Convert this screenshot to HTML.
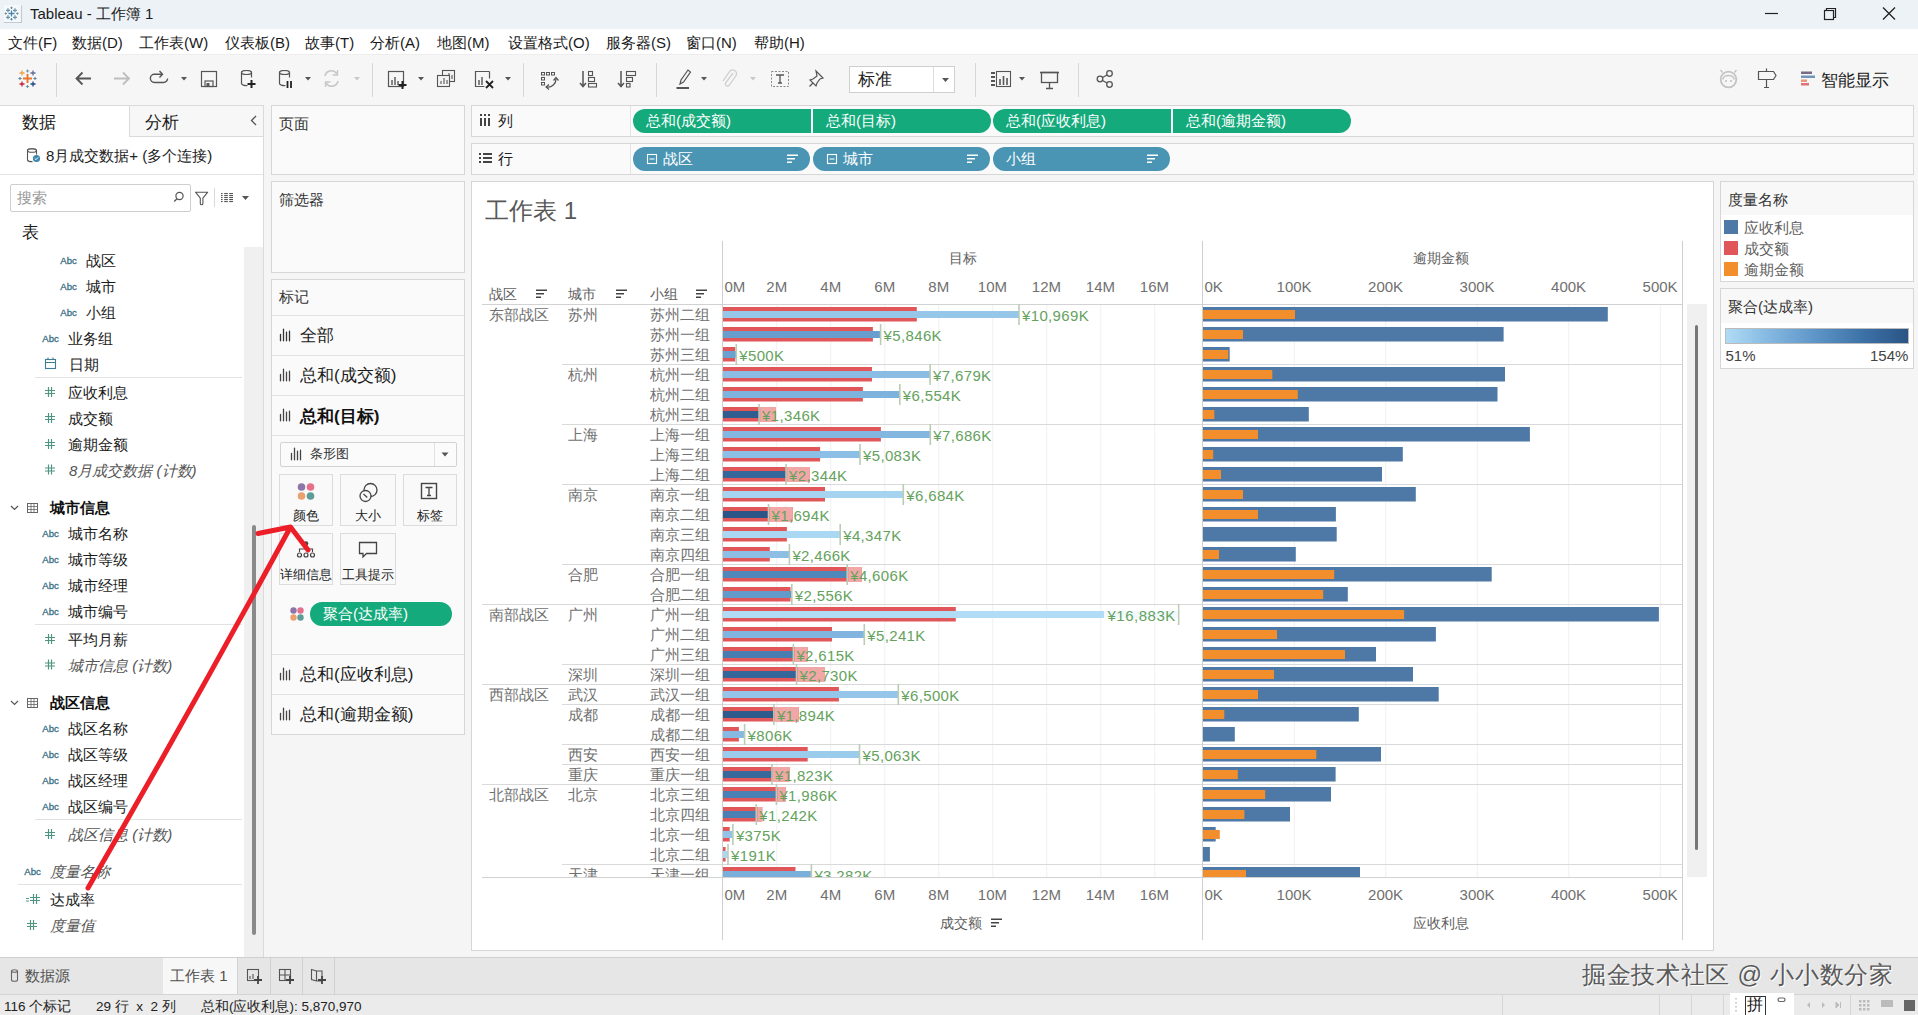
<!DOCTYPE html><html><head><meta charset="utf-8"><style>
html,body{margin:0;padding:0;}
body{width:1918px;height:1015px;overflow:hidden;position:relative;background:#F5F5F5;font-family:"Liberation Sans",sans-serif;}
.t{position:absolute;white-space:nowrap;line-height:1;}
.r{position:absolute;}
svg{position:absolute;overflow:visible;}
</style></head><body>
<div class="r" style="left:0px;top:0px;width:1918px;height:29px;background:#EDF2F7;"></div>
<div class="t" style="left:30px;top:6px;font-size:15px;color:#1A1A1A;font-weight:normal;">Tableau - 工作簿 1</div>
<svg style="left:0;top:0" width="1918" height="28"><line x1="1765" y1="13.5" x2="1778" y2="13.5" stroke="#222" stroke-width="1.2"/><rect x="1824.5" y="10.5" width="9" height="9" fill="none" stroke="#222" stroke-width="1.2"/><path d="M1826.5 10.5 V8.5 H1835.5 V17.5 H1833.5" fill="none" stroke="#222" stroke-width="1.2"/><path d="M1883 7.5 L1895 19.5 M1895 7.5 L1883 19.5" stroke="#222" stroke-width="1.3"/></svg>
<svg style="left:0;top:0" width="30" height="30"><rect x="4" y="5" width="17.5" height="17.5" fill="#F6F9FB"/><path d="M21.5 5.5V22.5H4" fill="none" stroke="#C5CAD1" stroke-width="1.2"/><path d="M8.5 13.5H14.5M11.5 10.5V16.5" stroke="#4A86B0" stroke-width="1.3"/><path d="M6 10.3H10M8 8.3V12.3" stroke="#6C93A6" stroke-width="1.2"/><path d="M13 10.3H17M15 8.3V12.3" stroke="#6C93A6" stroke-width="1.2"/><path d="M6 17.3H10M8 15.3V19.3" stroke="#6C93A6" stroke-width="1.2"/><path d="M13 17.3H17M15 15.3V19.3" stroke="#6C93A6" stroke-width="1.2"/><path d="M10.3 7.8H12.7M11.5 6.6V9.0" stroke="#6C8FA0" stroke-width="1"/><path d="M10.3 19.3H12.7M11.5 18.1V20.5" stroke="#4A86B0" stroke-width="1"/><path d="M4.6 13.5H7.0M5.8 12.3V14.7" stroke="#6C8FA0" stroke-width="1"/><path d="M16.2 13.5H18.599999999999998M17.4 12.3V14.7" stroke="#6C8FA0" stroke-width="1"/></svg>
<div class="r" style="left:0px;top:29px;width:1918px;height:25px;background:#FFFFFF;"></div>
<div class="t" style="left:8px;top:35px;font-size:15px;color:#1A1A1A;font-weight:normal;">文件(F)</div>
<div class="t" style="left:72px;top:35px;font-size:15px;color:#1A1A1A;font-weight:normal;">数据(D)</div>
<div class="t" style="left:139px;top:35px;font-size:15px;color:#1A1A1A;font-weight:normal;">工作表(W)</div>
<div class="t" style="left:225px;top:35px;font-size:15px;color:#1A1A1A;font-weight:normal;">仪表板(B)</div>
<div class="t" style="left:305px;top:35px;font-size:15px;color:#1A1A1A;font-weight:normal;">故事(T)</div>
<div class="t" style="left:370px;top:35px;font-size:15px;color:#1A1A1A;font-weight:normal;">分析(A)</div>
<div class="t" style="left:437px;top:35px;font-size:15px;color:#1A1A1A;font-weight:normal;">地图(M)</div>
<div class="t" style="left:508px;top:35px;font-size:15px;color:#1A1A1A;font-weight:normal;">设置格式(O)</div>
<div class="t" style="left:606px;top:35px;font-size:15px;color:#1A1A1A;font-weight:normal;">服务器(S)</div>
<div class="t" style="left:686px;top:35px;font-size:15px;color:#1A1A1A;font-weight:normal;">窗口(N)</div>
<div class="t" style="left:754px;top:35px;font-size:15px;color:#1A1A1A;font-weight:normal;">帮助(H)</div>
<div class="r" style="left:0px;top:54px;width:1918px;height:51px;background:#F6F6F6;border-top:1px solid #EDEDED;box-sizing:border-box;"></div>
<svg style="left:0;top:0" width="1918" height="105"><path d="M23.0 78.5H32.0M27.5 74.0V83.0" stroke="#E8762C" stroke-width="1.9"/><path d="M19.5 73H24.5M22 70.5V75.5" stroke="#EDA247" stroke-width="1.3"/><path d="M30.5 73H35.5M33 70.5V75.5" stroke="#5B6F9B" stroke-width="1.3"/><path d="M19.5 84H24.5M22 81.5V86.5" stroke="#C72037" stroke-width="1.3"/><path d="M30.5 84H35.5M33 81.5V86.5" stroke="#1F457E" stroke-width="1.3"/><path d="M25.9 71H29.1M27.5 69.4V72.6" stroke="#7099A6" stroke-width="1.1"/><path d="M25.9 86.5H29.1M27.5 84.9V88.1" stroke="#7099A6" stroke-width="1.1"/><path d="M18.4 78.5H21.6M20 76.9V80.1" stroke="#59879B" stroke-width="1.1"/><path d="M33.4 78.5H36.6M35 76.9V80.1" stroke="#59879B" stroke-width="1.1"/><line x1="56.5" y1="63" x2="56.5" y2="97" stroke="#D6D6D6" stroke-width="1"/><line x1="372.5" y1="63" x2="372.5" y2="97" stroke="#D6D6D6" stroke-width="1"/><line x1="523.5" y1="63" x2="523.5" y2="97" stroke="#D6D6D6" stroke-width="1"/><line x1="656.5" y1="63" x2="656.5" y2="97" stroke="#D6D6D6" stroke-width="1"/><line x1="975.5" y1="63" x2="975.5" y2="97" stroke="#D6D6D6" stroke-width="1"/><line x1="1078.5" y1="63" x2="1078.5" y2="97" stroke="#D6D6D6" stroke-width="1"/><path d="M91 78.5H76.5M82.5 72.5L76.5 78.5L82.5 84.5" fill="none" stroke="#555" stroke-width="1.8"/><path d="M114 78.5H129M123 72.5L129 78.5L123 84.5" fill="none" stroke="#BDBDBD" stroke-width="1.8"/><path d="M162 74.2H154.5a4.1 4.1 0 0 0 0 8.3h9a4.1 4.1 0 0 0 4.1-4.1" fill="none" stroke="#555" stroke-width="1.4"/><path d="M159.5 71l3 3.2-3 3.2" fill="none" stroke="#555" stroke-width="1.4"/><path d="M181 77 h6 l-3 3.5z" fill="#555"/><rect x="201.5" y="71.5" width="15" height="15" fill="none" stroke="#555" stroke-width="1.2"/><rect x="205" y="81" width="8" height="5.5" fill="none" stroke="#555" stroke-width="1.2"/><rect x="206.5" y="83" width="3" height="3" fill="#555"/><path d="M241.5 72.5v11a5 2 0 0 0 6 2M241.5 72.5a5 2 0 0 1 10 0v5" fill="none" stroke="#555" stroke-width="1.2"/><ellipse cx="246.5" cy="72.5" rx="5" ry="2" fill="none" stroke="#555" stroke-width="1.2"/><path d="M251.5 80v8M247.5 84h8" stroke="#222" stroke-width="2"/><path d="M279.5 72.5v11a5 2 0 0 0 6 2M279.5 72.5a5 2 0 0 1 10 0v5" fill="none" stroke="#555" stroke-width="1.2"/><ellipse cx="284.5" cy="72.5" rx="5" ry="2" fill="none" stroke="#555" stroke-width="1.2"/><path d="M287.5 81v7M291 81v7" stroke="#222" stroke-width="1.8"/><path d="M305 77 h6 l-3 3.5z" fill="#555"/><path d="M325 76a6.5 6.5 0 0 1 12 -2M338 81a6.5 6.5 0 0 1 -12 2" fill="none" stroke="#C8C8C8" stroke-width="1.6"/><path d="M337.5 70v5h-5M325.5 87v-5h5" fill="none" stroke="#C8C8C8" stroke-width="1.4"/><path d="M354 77 h6 l-3 3.5z" fill="#C8C8C8"/><rect x="388.5" y="71.5" width="15" height="15" fill="none" stroke="#555" stroke-width="1.2"/><path d="M392 85v-5M395 85v-8M398 85v-4" stroke="#555" stroke-width="1.4"/><path d="M402.5 81v8M398.5 85h8" stroke="#222" stroke-width="2"/><path d="M418 77 h6 l-3 3.5z" fill="#555"/><rect x="442.5" y="70.5" width="12" height="11" fill="#F3F3F3" stroke="#555" stroke-width="1.1"/><path d="M446 79v-3M449 79v-6M452 79v-4" stroke="#555" stroke-width="1.1"/><rect x="437.5" y="75.5" width="12" height="11" fill="#F3F3F3" stroke="#555" stroke-width="1.1"/><path d="M441 84v-3M444 84v-6M447 84v-4" stroke="#555" stroke-width="1.1"/><path d="M489.5 71.5h-14v15h9" fill="none" stroke="#555" stroke-width="1.2"/><path d="M489.5 71.5v7" stroke="#555" stroke-width="1.2"/><path d="M479 85v-5M482 85v-8" stroke="#555" stroke-width="1.4"/><path d="M486 81l7 7M493 81l-7 7" stroke="#222" stroke-width="1.8"/><path d="M505 77 h6 l-3 3.5z" fill="#555"/><g fill="none" stroke="#555" stroke-width="1"><rect x="541.5" y="72.5" width="3" height="2.5"/><rect x="546.5" y="72.5" width="3" height="2.5"/><rect x="551.5" y="72.5" width="3" height="2.5"/><rect x="541.5" y="77.5" width="3" height="2.5"/><rect x="541.5" y="82.5" width="3" height="2.5"/></g><path d="M547 87a8 8 0 0 0 9-8" fill="none" stroke="#555" stroke-width="1.3"/><path d="M553.5 80.5l2.5-3 2.5 3M549 84.5l-3 2.5 3 2.5" fill="none" stroke="#555" stroke-width="1.2"/><path d="M583 71v15M580 83l3 3.5 3-3.5" fill="none" stroke="#555" stroke-width="1.5"/><rect x="588.5" y="71.5" width="4" height="4" fill="none" stroke="#555" stroke-width="1.1"/><rect x="588.5" y="77.5" width="6" height="4" fill="none" stroke="#555" stroke-width="1.1"/><rect x="588.5" y="83.5" width="8" height="3.5" fill="none" stroke="#555" stroke-width="1.1"/><path d="M621 71v15M618 83l3 3.5 3-3.5" fill="none" stroke="#555" stroke-width="1.5"/><rect x="626.5" y="71.5" width="9" height="4" fill="none" stroke="#555" stroke-width="1.1"/><rect x="626.5" y="77.5" width="6" height="4" fill="none" stroke="#555" stroke-width="1.1"/><rect x="626.5" y="83.5" width="3.5" height="3.5" fill="none" stroke="#555" stroke-width="1.1"/><path d="M680 84l1-4 7-10 2.5 2-7 10z" fill="none" stroke="#555" stroke-width="1.2"/><path d="M676.5 88h12.5" stroke="#555" stroke-width="2"/><path d="M701 77 h6 l-3 3.5z" fill="#555"/><path d="M733 73l-7.5 10a2.2 2.2 0 0 0 3.5 2.5l7-10a3.8 3.8 0 0 0 -6 -4.5l-7 10" fill="none" stroke="#CFCFCF" stroke-width="1.3"/><path d="M750 77 h6 l-3 3.5z" fill="#C8C8C8"/><rect x="771.5" y="71.5" width="17" height="15" fill="none" stroke="#888" stroke-width="1" stroke-dasharray="2 1.5"/><path d="M776 75h8M780 75v8M778 83h4" stroke="#555" stroke-width="1.3" fill="none"/><path d="M816 71l7 7-3 1-3 4-1 3-6-6 3-1 4-3z" fill="none" stroke="#555" stroke-width="1.2"/><path d="M813 83l-3.5 3.5" stroke="#555" stroke-width="1.3"/><g fill="#555"><rect x="991" y="72" width="4" height="2"/><rect x="991" y="76" width="4" height="2"/><rect x="991" y="80" width="4" height="2"/><rect x="991" y="84" width="4" height="2"/></g><rect x="996.5" y="71.5" width="14" height="15" fill="none" stroke="#555" stroke-width="1.1"/><path d="M1000 85v-6M1003.5 85v-9M1007 85v-7" stroke="#555" stroke-width="1.6"/><path d="M1019 77 h6 l-3 3.5z" fill="#555"/><rect x="1041.5" y="72.5" width="16" height="10" fill="none" stroke="#555" stroke-width="1.3"/><path d="M1040 72.5h19M1049.5 82.5v6M1046 88.5h7" stroke="#555" stroke-width="1.3"/><circle cx="1100" cy="79" r="2.8" fill="none" stroke="#555" stroke-width="1.3"/><circle cx="1109.5" cy="73.5" r="2.8" fill="none" stroke="#555" stroke-width="1.3"/><circle cx="1109.5" cy="84.5" r="2.8" fill="none" stroke="#555" stroke-width="1.3"/><path d="M1102.5 77.5l4.5-2.5M1102.5 80.5l4.5 2.5" stroke="#555" stroke-width="1.3"/><circle cx="1728.5" cy="79.5" r="7.8" fill="none" stroke="#C4C4C4" stroke-width="1.8"/><path d="M1723 79.5a5.5 4 0 0 1 11 0" fill="none" stroke="#C4C4C4" stroke-width="1.6"/><circle cx="1726" cy="81" r="1.1" fill="#C4C4C4"/><circle cx="1731" cy="81" r="1.1" fill="#C4C4C4"/><path d="M1722.5 72.5l-2 -2.5M1734.5 72.5l2 -2.5" stroke="#C4C4C4" stroke-width="1.4"/><path d="M1758.5 71.5h15l2.5 4-2.5 4h-15z M1766.5 68.5v3M1766.5 79.5v8M1764 87.5h5" fill="none" stroke="#555" stroke-width="1.2"/><rect x="1801" y="71.5" width="11" height="2.5" fill="#786C84"/><rect x="1801" y="75.5" width="14" height="2.5" fill="#7395B8"/><rect x="1801" y="79.5" width="6" height="2.5" fill="#E9967C"/><rect x="1801" y="83" width="8" height="2.5" fill="#E0707A"/></svg>
<div class="t" style="left:1821px;top:71.5px;font-size:17px;color:#1A1A1A;font-weight:normal;">智能显示</div>
<div class="r" style="left:849px;top:66px;width:106px;height:27px;background:#FFFFFF;box-sizing:border-box;border:1px solid #CFCFCF;"></div>
<div class="r" style="left:933px;top:67px;width:1px;height:25px;background:#DDDDDD;"></div>
<div class="t" style="left:858px;top:71px;font-size:17px;color:#222;font-weight:normal;">标准</div>
<svg style="left:0;top:0" width="1" height="1"><path d="M942 78h7l-3.5 4z" fill="#555"/></svg>
<div class="r" style="left:0px;top:105px;width:264px;height:852px;background:#FFFFFF;box-sizing:border-box;border-top:1px solid #DADADA;border-right:1px solid #DADADA;"></div>
<div class="r" style="left:129px;top:106px;width:134px;height:31px;background:#F7F7F7;box-sizing:border-box;border-left:1px solid #DADADA;border-bottom:1px solid #DADADA;"></div>
<div class="t" style="left:22px;top:113.5px;font-size:17px;color:#1A1A1A;font-weight:normal;">数据</div>
<div class="t" style="left:145px;top:113.5px;font-size:17px;color:#1A1A1A;font-weight:normal;">分析</div>
<svg style="left:0;top:0" width="1" height="1"><path d="M256 116l-4.5 4.5 4.5 4.5" fill="none" stroke="#555" stroke-width="1.3"/></svg>
<svg style="left:0;top:0" width="1" height="1"><path d="M27.5 150.5v9.5a4.5 1.8 0 0 0 5 1.6M27.5 150.5a4.5 1.8 0 0 1 9 0v4" fill="none" stroke="#555" stroke-width="1.1"/><ellipse cx="32" cy="150.5" rx="4.5" ry="1.8" fill="none" stroke="#555" stroke-width="1.1"/><circle cx="36.5" cy="158.5" r="3.6" fill="#3E88B0"/><path d="M34.8 158.5l1.2 1.2 2.2-2.3" fill="none" stroke="#fff" stroke-width="1"/></svg>
<div class="t" style="left:46px;top:148px;font-size:15px;color:#222;font-weight:normal;">8月成交数据+ (多个连接)</div>
<div class="r" style="left:0px;top:174px;width:263px;height:1px;background:#E2E2E2;"></div>
<div class="r" style="left:10px;top:184px;width:181px;height:28px;background:#FFFFFF;box-sizing:border-box;border:1px solid #CFCFCF;border-radius:2px;"></div>
<div class="t" style="left:17px;top:190px;font-size:15px;color:#9A9A9A;font-weight:normal;">搜索</div>
<svg style="left:0;top:0" width="1" height="1"><circle cx="179.5" cy="196" r="3.6" fill="none" stroke="#555" stroke-width="1.2"/><path d="M177 198.7l-2.8 2.8" stroke="#555" stroke-width="1.3"/><path d="M195.5 192.2h12.2l-4.8 6v5.2a1.3 1.3 0 0 1 -2.6 0v-5.2z" fill="none" stroke="#555" stroke-width="1.1" stroke-linejoin="round"/><line x1="214.5" y1="188" x2="214.5" y2="207" stroke="#D8D8D8"/><g fill="#555"><rect x="221" y="193" width="1.6" height="1.1"/><rect x="224.2" y="193" width="3.6" height="1.1"/><rect x="229.2" y="193" width="3.8" height="1.1"/><rect x="221" y="195" width="1.6" height="1.1"/><rect x="224.2" y="195" width="3.6" height="1.1"/><rect x="229.2" y="195" width="3.8" height="1.1"/><rect x="221" y="197" width="1.6" height="1.1"/><rect x="224.2" y="197" width="3.6" height="1.1"/><rect x="229.2" y="197" width="3.8" height="1.1"/><rect x="221" y="199" width="1.6" height="1.1"/><rect x="224.2" y="199" width="3.6" height="1.1"/><rect x="229.2" y="199" width="3.8" height="1.1"/><rect x="221" y="201" width="1.6" height="1.1"/><rect x="224.2" y="201" width="3.6" height="1.1"/><rect x="229.2" y="201" width="3.8" height="1.1"/></g><path d="M242 196h7l-3.5 4z" fill="#555"/></svg>
<div class="t" style="left:22px;top:224px;font-size:17px;color:#1A1A1A;font-weight:normal;">表</div>
<div class="r" style="left:244px;top:247px;width:19px;height:710px;background:#F0F0F0;"></div>
<div class="r" style="left:252px;top:525px;width:3.5px;height:410px;background:#8A8A8A;border-radius:2px;"></div>
<div class="t" style="left:60.3px;top:255.7px;font-size:9.6px;color:#3A7085;font-weight:normal;-webkit-text-stroke:0.3px #3A7085;">Abc</div>
<div class="t" style="left:86px;top:252.5px;font-size:15px;color:#1A1A1A;font-weight:normal;">战区</div>
<div class="t" style="left:60.3px;top:281.7px;font-size:9.6px;color:#3A7085;font-weight:normal;-webkit-text-stroke:0.3px #3A7085;">Abc</div>
<div class="t" style="left:86px;top:278.5px;font-size:15px;color:#1A1A1A;font-weight:normal;">城市</div>
<div class="t" style="left:60.3px;top:307.7px;font-size:9.6px;color:#3A7085;font-weight:normal;-webkit-text-stroke:0.3px #3A7085;">Abc</div>
<div class="t" style="left:86px;top:304.5px;font-size:15px;color:#1A1A1A;font-weight:normal;">小组</div>
<div class="t" style="left:42.3px;top:333.7px;font-size:9.6px;color:#3A7085;font-weight:normal;-webkit-text-stroke:0.3px #3A7085;">Abc</div>
<div class="t" style="left:68px;top:330.5px;font-size:15px;color:#1A1A1A;font-weight:normal;">业务组</div>
<svg style="left:0;top:0" width="1" height="1"><rect x="45.5" y="359.5" width="10" height="9" fill="none" stroke="#3E7B95" stroke-width="1.1"/><path d="M45 362.5h11M48 357.5v2M53 357.5v2" stroke="#3E7B95" stroke-width="1.1"/></svg>
<div class="t" style="left:69px;top:356.5px;font-size:15px;color:#1A1A1A;font-weight:normal;">日期</div>
<svg style="left:0;top:0" width="1" height="1"><path d="M48.5 387.0v10M51.5 387.0v10M45 390.5h10M45 393.5h10" stroke="#4F9480" stroke-width="1.15"/></svg>
<div class="t" style="left:68px;top:385.0px;font-size:15px;color:#1A1A1A;font-weight:normal;">应收利息</div>
<svg style="left:0;top:0" width="1" height="1"><path d="M48.5 413.0v10M51.5 413.0v10M45 416.5h10M45 419.5h10" stroke="#4F9480" stroke-width="1.15"/></svg>
<div class="t" style="left:68px;top:411.0px;font-size:15px;color:#1A1A1A;font-weight:normal;">成交额</div>
<svg style="left:0;top:0" width="1" height="1"><path d="M48.5 439.0v10M51.5 439.0v10M45 442.5h10M45 445.5h10" stroke="#4F9480" stroke-width="1.15"/></svg>
<div class="t" style="left:68px;top:437.0px;font-size:15px;color:#1A1A1A;font-weight:normal;">逾期金额</div>
<svg style="left:0;top:0" width="1" height="1"><path d="M48.5 464.5v10M51.5 464.5v10M45 468h10M45 471h10" stroke="#4F9480" stroke-width="1.15"/></svg>
<div class="t" style="left:69px;top:462.5px;font-size:15px;color:#555;font-weight:normal;font-style:italic;">8月成交数据 (计数)</div>
<div class="t" style="left:42.3px;top:529.2px;font-size:9.6px;color:#3A7085;font-weight:normal;-webkit-text-stroke:0.3px #3A7085;">Abc</div>
<div class="t" style="left:68px;top:526.0px;font-size:15px;color:#1A1A1A;font-weight:normal;">城市名称</div>
<div class="t" style="left:42.3px;top:555.2px;font-size:9.6px;color:#3A7085;font-weight:normal;-webkit-text-stroke:0.3px #3A7085;">Abc</div>
<div class="t" style="left:68px;top:552.0px;font-size:15px;color:#1A1A1A;font-weight:normal;">城市等级</div>
<div class="t" style="left:42.3px;top:581.2px;font-size:9.6px;color:#3A7085;font-weight:normal;-webkit-text-stroke:0.3px #3A7085;">Abc</div>
<div class="t" style="left:68px;top:578.0px;font-size:15px;color:#1A1A1A;font-weight:normal;">城市经理</div>
<div class="t" style="left:42.3px;top:607.2px;font-size:9.6px;color:#3A7085;font-weight:normal;-webkit-text-stroke:0.3px #3A7085;">Abc</div>
<div class="t" style="left:68px;top:604.0px;font-size:15px;color:#1A1A1A;font-weight:normal;">城市编号</div>
<svg style="left:0;top:0" width="1" height="1"><path d="M48.5 634.0v10M51.5 634.0v10M45 637.5h10M45 640.5h10" stroke="#4F9480" stroke-width="1.15"/></svg>
<div class="t" style="left:68px;top:632.0px;font-size:15px;color:#1A1A1A;font-weight:normal;">平均月薪</div>
<svg style="left:0;top:0" width="1" height="1"><path d="M48.5 659.5v10M51.5 659.5v10M45 663h10M45 666h10" stroke="#4F9480" stroke-width="1.15"/></svg>
<div class="t" style="left:68px;top:657.5px;font-size:15px;color:#555;font-weight:normal;font-style:italic;">城市信息 (计数)</div>
<div class="t" style="left:42.3px;top:724.2px;font-size:9.6px;color:#3A7085;font-weight:normal;-webkit-text-stroke:0.3px #3A7085;">Abc</div>
<div class="t" style="left:68px;top:721.0px;font-size:15px;color:#1A1A1A;font-weight:normal;">战区名称</div>
<div class="t" style="left:42.3px;top:750.2px;font-size:9.6px;color:#3A7085;font-weight:normal;-webkit-text-stroke:0.3px #3A7085;">Abc</div>
<div class="t" style="left:68px;top:747.0px;font-size:15px;color:#1A1A1A;font-weight:normal;">战区等级</div>
<div class="t" style="left:42.3px;top:776.2px;font-size:9.6px;color:#3A7085;font-weight:normal;-webkit-text-stroke:0.3px #3A7085;">Abc</div>
<div class="t" style="left:68px;top:773.0px;font-size:15px;color:#1A1A1A;font-weight:normal;">战区经理</div>
<div class="t" style="left:42.3px;top:802.2px;font-size:9.6px;color:#3A7085;font-weight:normal;-webkit-text-stroke:0.3px #3A7085;">Abc</div>
<div class="t" style="left:68px;top:799.0px;font-size:15px;color:#1A1A1A;font-weight:normal;">战区编号</div>
<svg style="left:0;top:0" width="1" height="1"><path d="M48.5 829.0v10M51.5 829.0v10M45 832.5h10M45 835.5h10" stroke="#4F9480" stroke-width="1.15"/></svg>
<div class="t" style="left:68px;top:827.0px;font-size:15px;color:#555;font-weight:normal;font-style:italic;">战区信息 (计数)</div>
<div class="t" style="left:24.3px;top:867.2px;font-size:9.6px;color:#3A7085;font-weight:normal;-webkit-text-stroke:0.3px #3A7085;">Abc</div>
<div class="t" style="left:50px;top:864.0px;font-size:15px;color:#555;font-weight:normal;font-style:italic;">度量名称</div>
<svg style="left:0;top:0" width="1" height="1"><path d="M33.5 894.0v10M36.5 894.0v10M30 897.5h10M30 900.5h10" stroke="#4F9480" stroke-width="1.15"/></svg>
<svg style="left:0;top:0" width="1" height="1"><path d="M26 898.5h3M26 901.0h3" stroke="#4E9A8C" stroke-width="1"/></svg>
<div class="t" style="left:50px;top:892.0px;font-size:15px;color:#1A1A1A;font-weight:normal;">达成率</div>
<svg style="left:0;top:0" width="1" height="1"><path d="M30.5 920.0v10M33.5 920.0v10M27 923.5h10M27 926.5h10" stroke="#4F9480" stroke-width="1.15"/></svg>
<div class="t" style="left:50px;top:918.0px;font-size:15px;color:#555;font-weight:normal;font-style:italic;">度量值</div>
<svg style="left:0;top:0" width="1" height="1"><path d="M11 506l3.5 3.5 3.5-3.5" fill="none" stroke="#555" stroke-width="1.2"/></svg>
<svg style="left:0;top:0" width="1" height="1"><rect x="27.5" y="503.5" width="10" height="9" fill="none" stroke="#666" stroke-width="1"/><path d="M27 506.5h11M27 509.5h11M31 503.5v9M34 503.5v9" stroke="#666" stroke-width="0.8"/></svg>
<div class="t" style="left:50px;top:499.5px;font-size:15px;color:#111;font-weight:bold;">城市信息</div>
<svg style="left:0;top:0" width="1" height="1"><path d="M11 701l3.5 3.5 3.5-3.5" fill="none" stroke="#555" stroke-width="1.2"/></svg>
<svg style="left:0;top:0" width="1" height="1"><rect x="27.5" y="698.5" width="10" height="9" fill="none" stroke="#666" stroke-width="1"/><path d="M27 701.5h11M27 704.5h11M31 698.5v9M34 698.5v9" stroke="#666" stroke-width="0.8"/></svg>
<div class="t" style="left:50px;top:694.5px;font-size:15px;color:#111;font-weight:bold;">战区信息</div>
<div class="r" style="left:35px;top:377px;width:207px;height:1px;background:#E2E2E2;"></div>
<div class="r" style="left:35px;top:624px;width:207px;height:1px;background:#E2E2E2;"></div>
<div class="r" style="left:35px;top:819px;width:207px;height:1px;background:#E2E2E2;"></div>
<div class="r" style="left:18px;top:884px;width:224px;height:1px;background:#E2E2E2;"></div>
<div class="r" style="left:271px;top:105px;width:194px;height:70px;background:#FAFAFA;box-sizing:border-box;border:1px solid #D6D6D6;"></div>
<div class="t" style="left:279px;top:116px;font-size:15px;color:#333;font-weight:normal;">页面</div>
<div class="r" style="left:271px;top:181px;width:194px;height:92px;background:#FAFAFA;box-sizing:border-box;border:1px solid #D6D6D6;"></div>
<div class="t" style="left:279px;top:192px;font-size:15px;color:#333;font-weight:normal;">筛选器</div>
<div class="r" style="left:271px;top:279px;width:194px;height:456px;background:#FAFAFA;box-sizing:border-box;border:1px solid #D6D6D6;"></div>
<div class="t" style="left:279px;top:289px;font-size:15px;color:#333;font-weight:normal;">标记</div>
<div class="r" style="left:272px;top:315px;width:192px;height:1px;background:#E2E2E2;"></div>
<div class="r" style="left:272px;top:355px;width:192px;height:1px;background:#E2E2E2;"></div>
<div class="r" style="left:272px;top:395px;width:192px;height:1px;background:#E2E2E2;"></div>
<div class="r" style="left:272px;top:435px;width:192px;height:1px;background:#E2E2E2;"></div>
<div class="r" style="left:272px;top:654px;width:192px;height:1px;background:#E2E2E2;"></div>
<div class="r" style="left:272px;top:694px;width:192px;height:1px;background:#E2E2E2;"></div>
<svg style="left:0;top:0" width="1" height="1"><path d="M280.5 340.8v-6.5M283.5 340.8v-11.6M286.5 340.8v-8.6M289.5 340.8v-9.6" stroke="#333" stroke-width="1.3" stroke-linecap="round"/></svg>
<div class="t" style="left:300px;top:327px;font-size:17px;color:#1A1A1A;font-weight:normal;">全部</div>
<svg style="left:0;top:0" width="1" height="1"><path d="M280.5 380.8v-6.5M283.5 380.8v-11.6M286.5 380.8v-8.6M289.5 380.8v-9.6" stroke="#444" stroke-width="1.3" stroke-linecap="round"/></svg>
<div class="t" style="left:300px;top:367px;font-size:17px;color:#1A1A1A;font-weight:normal;">总和(成交额)</div>
<svg style="left:0;top:0" width="1" height="1"><path d="M280.5 420.8v-6.5M283.5 420.8v-11.6M286.5 420.8v-8.6M289.5 420.8v-9.6" stroke="#444" stroke-width="1.3" stroke-linecap="round"/></svg>
<div class="t" style="left:300px;top:408px;font-size:17px;color:#111;font-weight:bold;">总和(目标)</div>
<svg style="left:0;top:0" width="1" height="1"><path d="M280.5 679.8v-6.5M283.5 679.8v-11.6M286.5 679.8v-8.6M289.5 679.8v-9.6" stroke="#444" stroke-width="1.3" stroke-linecap="round"/></svg>
<div class="t" style="left:300px;top:666px;font-size:17px;color:#1A1A1A;font-weight:normal;">总和(应收利息)</div>
<svg style="left:0;top:0" width="1" height="1"><path d="M280.5 719.8v-6.5M283.5 719.8v-11.6M286.5 719.8v-8.6M289.5 719.8v-9.6" stroke="#444" stroke-width="1.3" stroke-linecap="round"/></svg>
<div class="t" style="left:300px;top:706px;font-size:17px;color:#1A1A1A;font-weight:normal;">总和(逾期金额)</div>
<div class="r" style="left:279.5px;top:442px;width:177px;height:25px;background:#FBFBFB;box-sizing:border-box;border:1px solid #D2D2D2;border-radius:2px;"></div>
<div class="r" style="left:434px;top:443px;width:1px;height:23px;background:#E0E0E0;"></div>
<svg style="left:0;top:0" width="1" height="1"><path d="M291.5 459.8v-6.5M294.5 459.8v-11.6M297.5 459.8v-8.6M300.5 459.8v-9.6" stroke="#444" stroke-width="1.3" stroke-linecap="round"/></svg>
<div class="t" style="left:310px;top:447px;font-size:13px;color:#333;font-weight:normal;">条形图</div>
<svg style="left:0;top:0" width="1" height="1"><path d="M441.5 452.5h7l-3.5 4z" fill="#555"/></svg>
<div class="r" style="left:279px;top:474px;width:54px;height:52px;background:#F9F9F9;box-sizing:border-box;border:1px solid #DCDCDC;"></div>
<div class="r" style="left:340px;top:474px;width:56px;height:52px;background:#F9F9F9;box-sizing:border-box;border:1px solid #DCDCDC;"></div>
<div class="r" style="left:403px;top:474px;width:54px;height:52px;background:#F9F9F9;box-sizing:border-box;border:1px solid #DCDCDC;"></div>
<div class="r" style="left:279px;top:533px;width:54px;height:52px;background:#F9F9F9;box-sizing:border-box;border:1px solid #DCDCDC;"></div>
<div class="r" style="left:340px;top:533px;width:56px;height:52px;background:#F9F9F9;box-sizing:border-box;border:1px solid #DCDCDC;"></div>
<div class="t" style="left:293px;top:509px;font-size:13px;color:#222;font-weight:normal;">颜色</div>
<div class="t" style="left:355px;top:509px;font-size:13px;color:#222;font-weight:normal;">大小</div>
<div class="t" style="left:417px;top:509px;font-size:13px;color:#222;font-weight:normal;">标签</div>
<div class="t" style="left:280px;top:568px;font-size:13px;color:#222;font-weight:normal;">详细信息</div>
<div class="t" style="left:342px;top:568px;font-size:13px;color:#222;font-weight:normal;">工具提示</div>
<svg style="left:0;top:0" width="1" height="1"><circle cx="301.5" cy="487" r="3.8" fill="#8C78A8"/><circle cx="310.5" cy="487" r="3.8" fill="#E66F8C"/><circle cx="301.5" cy="496" r="3.8" fill="#EBA06F"/><circle cx="310.5" cy="496" r="3.8" fill="#5E9C9A"/><circle cx="370.5" cy="490" r="6.5" fill="none" stroke="#444" stroke-width="1.3"/><circle cx="365.5" cy="496" r="5.5" fill="#F9F9F9" stroke="#444" stroke-width="1.3"/><path d="M363.5 494l3.8 3.5" stroke="#444" stroke-width="1.2"/><rect x="421.5" y="483.5" width="15" height="15" fill="none" stroke="#444" stroke-width="1.4"/><path d="M425.5 487.5h7M429 487.5v8M427 495.5h4" fill="none" stroke="#444" stroke-width="1.3"/><circle cx="306" cy="543.5" r="2.3" fill="#444"/><path d="M306 546v3M299.5 552v-3h13v3" fill="none" stroke="#444" stroke-width="1.1"/><circle cx="299.5" cy="555" r="2" fill="none" stroke="#444" stroke-width="1.2"/><circle cx="306" cy="555" r="2" fill="none" stroke="#444" stroke-width="1.2"/><circle cx="312.5" cy="555" r="2" fill="none" stroke="#444" stroke-width="1.2"/><path d="M359.5 542.5h17v11h-10l-3.5 3.5v-3.5h-3.5z" fill="none" stroke="#444" stroke-width="1.3"/><circle cx="293.5" cy="610.5" r="3.2" fill="#8C78A8"/><circle cx="300.5" cy="610.5" r="3.2" fill="#E66F8C"/><circle cx="293.5" cy="617.5" r="3.2" fill="#EBA06F"/><circle cx="300.5" cy="617.5" r="3.2" fill="#5E9C9A"/></svg>
<div class="r" style="left:310px;top:602px;width:142px;height:24px;background:#14AA7B;border-radius:12px;"></div>
<div class="t" style="left:323px;top:606px;font-size:15px;color:#FFFFFF;font-weight:normal;">聚合(达成率)</div>
<div class="r" style="left:471px;top:105px;width:1443px;height:32px;background:#FAFAFA;box-sizing:border-box;border:1px solid #D6D6D6;"></div>
<div class="r" style="left:630px;top:106px;width:1px;height:30px;background:#E2E2E2;"></div>
<div class="r" style="left:471px;top:143px;width:1443px;height:32px;background:#FAFAFA;box-sizing:border-box;border:1px solid #D6D6D6;"></div>
<div class="r" style="left:630px;top:144px;width:1px;height:30px;background:#E2E2E2;"></div>
<svg style="left:0;top:0" width="1" height="1"><g fill="#444"><rect x="480" y="114" width="2" height="2"/><rect x="484" y="114" width="2" height="2"/><rect x="488" y="114" width="2" height="2"/><rect x="480" y="118" width="2" height="8"/><rect x="484" y="118" width="2" height="8"/><rect x="488" y="118" width="2" height="8"/></g><g fill="#444"><rect x="479" y="153" width="2" height="2"/><rect x="483" y="153" width="9" height="2"/><rect x="479" y="157" width="2" height="2"/><rect x="483" y="157" width="9" height="2"/><rect x="479" y="161" width="2" height="2"/><rect x="483" y="161" width="9" height="2"/></g></svg>
<div class="t" style="left:498px;top:113px;font-size:15px;color:#222;font-weight:normal;">列</div>
<div class="t" style="left:498px;top:151px;font-size:15px;color:#222;font-weight:normal;">行</div>
<div class="r" style="left:633px;top:109px;width:178px;height:24px;background:#14AA7B;border-radius:12px 0 0 12px;"></div>
<div class="t" style="left:646px;top:113px;font-size:15px;color:#FFFFFF;font-weight:normal;">总和(成交额)</div>
<div class="r" style="left:813px;top:109px;width:178px;height:24px;background:#14AA7B;border-radius:0 12px 12px 0;"></div>
<div class="t" style="left:826px;top:113px;font-size:15px;color:#FFFFFF;font-weight:normal;">总和(目标)</div>
<div class="r" style="left:993px;top:109px;width:178px;height:24px;background:#14AA7B;border-radius:12px 0 0 12px;"></div>
<div class="t" style="left:1006px;top:113px;font-size:15px;color:#FFFFFF;font-weight:normal;">总和(应收利息)</div>
<div class="r" style="left:1173px;top:109px;width:178px;height:24px;background:#14AA7B;border-radius:0 12px 12px 0;"></div>
<div class="t" style="left:1186px;top:113px;font-size:15px;color:#FFFFFF;font-weight:normal;">总和(逾期金额)</div>
<div class="r" style="left:633px;top:147px;width:177px;height:24px;background:#4A95B4;border-radius:12px;"></div>
<div class="t" style="left:663px;top:151px;font-size:15px;color:#FFFFFF;font-weight:normal;">战区</div>
<div class="r" style="left:813px;top:147px;width:177px;height:24px;background:#4A95B4;border-radius:12px;"></div>
<div class="t" style="left:843px;top:151px;font-size:15px;color:#FFFFFF;font-weight:normal;">城市</div>
<div class="r" style="left:993px;top:147px;width:177px;height:24px;background:#4A95B4;border-radius:12px;"></div>
<div class="t" style="left:1006px;top:151px;font-size:15px;color:#FFFFFF;font-weight:normal;">小组</div>
<svg style="left:0;top:0" width="1" height="1"><rect x="647.5" y="154.5" width="9" height="9" fill="none" stroke="#fff" stroke-width="1.1"/><path d="M649.5 159h5" stroke="#fff" stroke-width="1.1"/><path d="M787 155.3h11M787 158.8h8M787 162.3h5" stroke="#FFFFFF" stroke-width="1.6"/><rect x="827.5" y="154.5" width="9" height="9" fill="none" stroke="#fff" stroke-width="1.1"/><path d="M829.5 159h5" stroke="#fff" stroke-width="1.1"/><path d="M967 155.3h11M967 158.8h8M967 162.3h5" stroke="#FFFFFF" stroke-width="1.6"/><path d="M1147 155.3h11M1147 158.8h8M1147 162.3h5" stroke="#FFFFFF" stroke-width="1.6"/></svg>
<div class="r" style="left:471px;top:181px;width:1243px;height:770px;background:#FFFFFF;box-sizing:border-box;border:1px solid #D6D6D6;"></div>
<div class="t" style="left:485px;top:198.5px;font-size:24px;color:#585858;font-weight:300;">工作表 1</div>
<svg style="left:0;top:0" width="1918" height="1015"><defs><clipPath id="rows"><rect x="472" y="304.5" width="1240" height="572.5"/></clipPath></defs><line x1="776.8" y1="241" x2="776.8" y2="940" stroke="#F0F0F0" stroke-width="1"/><line x1="830.8" y1="241" x2="830.8" y2="940" stroke="#F0F0F0" stroke-width="1"/><line x1="884.8" y1="241" x2="884.8" y2="940" stroke="#F0F0F0" stroke-width="1"/><line x1="938.8" y1="241" x2="938.8" y2="940" stroke="#F0F0F0" stroke-width="1"/><line x1="992.8" y1="241" x2="992.8" y2="940" stroke="#F0F0F0" stroke-width="1"/><line x1="1046.8" y1="241" x2="1046.8" y2="940" stroke="#F0F0F0" stroke-width="1"/><line x1="1100.8" y1="241" x2="1100.8" y2="940" stroke="#F0F0F0" stroke-width="1"/><line x1="1154.8" y1="241" x2="1154.8" y2="940" stroke="#F0F0F0" stroke-width="1"/><line x1="1294.3" y1="241" x2="1294.3" y2="940" stroke="#F0F0F0" stroke-width="1"/><line x1="1385.8" y1="241" x2="1385.8" y2="940" stroke="#F0F0F0" stroke-width="1"/><line x1="1477.3" y1="241" x2="1477.3" y2="940" stroke="#F0F0F0" stroke-width="1"/><line x1="1568.8" y1="241" x2="1568.8" y2="940" stroke="#F0F0F0" stroke-width="1"/><line x1="1660.3" y1="241" x2="1660.3" y2="940" stroke="#F0F0F0" stroke-width="1"/><rect x="723.5" y="241" width="958" height="63" fill="#FFFFFF"/><rect x="723.5" y="878" width="958" height="62" fill="#FFFFFF"/><line x1="562" y1="364.5" x2="1683" y2="364.5" stroke="#D9D9D9" stroke-width="1"/><line x1="562" y1="424.5" x2="1683" y2="424.5" stroke="#D9D9D9" stroke-width="1"/><line x1="562" y1="484.5" x2="1683" y2="484.5" stroke="#D9D9D9" stroke-width="1"/><line x1="562" y1="564.5" x2="1683" y2="564.5" stroke="#D9D9D9" stroke-width="1"/><line x1="482" y1="604.5" x2="1683" y2="604.5" stroke="#D9D9D9" stroke-width="1"/><line x1="562" y1="664.5" x2="1683" y2="664.5" stroke="#D9D9D9" stroke-width="1"/><line x1="482" y1="684.5" x2="1683" y2="684.5" stroke="#D9D9D9" stroke-width="1"/><line x1="562" y1="704.5" x2="1683" y2="704.5" stroke="#D9D9D9" stroke-width="1"/><line x1="562" y1="744.5" x2="1683" y2="744.5" stroke="#D9D9D9" stroke-width="1"/><line x1="562" y1="764.5" x2="1683" y2="764.5" stroke="#D9D9D9" stroke-width="1"/><line x1="482" y1="784.5" x2="1683" y2="784.5" stroke="#D9D9D9" stroke-width="1"/><line x1="562" y1="864.5" x2="1683" y2="864.5" stroke="#D9D9D9" stroke-width="1"/><line x1="482" y1="304.5" x2="1683" y2="304.5" stroke="#D2D2D2" stroke-width="1"/><line x1="482" y1="877.5" x2="1683" y2="877.5" stroke="#D2D2D2" stroke-width="1"/><line x1="722.5" y1="241" x2="722.5" y2="940" stroke="#CFCFCF" stroke-width="1"/><line x1="1202.5" y1="241" x2="1202.5" y2="940" stroke="#CFCFCF" stroke-width="1"/><line x1="1682.5" y1="241" x2="1682.5" y2="940" stroke="#CFCFCF" stroke-width="1"/><g clip-path="url(#rows)"><rect x="723" y="307" width="193.8" height="14.5" fill="#E15759"/><rect x="723" y="311" width="296.0" height="7" fill="#96C7E9"/><rect x="1203" y="307" width="404.8" height="14.5" fill="#4E79A7"/><rect x="1203" y="310" width="92.0" height="9" fill="#F28E2B"/><rect x="723" y="327" width="149.9" height="14.5" fill="#E15759"/><rect x="723" y="331" width="157.6" height="7" fill="#679ECD"/><rect x="1203" y="327" width="300.6" height="14.5" fill="#4E79A7"/><rect x="1203" y="330" width="40.0" height="9" fill="#F28E2B"/><rect x="723" y="347" width="12.3" height="14.5" fill="#E15759"/><rect x="723" y="351" width="13.3" height="7" fill="#6BA1D0"/><rect x="1203" y="347" width="26.7" height="14.5" fill="#4E79A7"/><rect x="1203" y="350" width="25.3" height="9" fill="#F28E2B"/><rect x="723" y="367" width="149.0" height="14.5" fill="#E15759"/><rect x="723" y="371" width="207.1" height="7" fill="#8BBDE4"/><rect x="1203" y="367" width="302.0" height="14.5" fill="#4E79A7"/><rect x="1203" y="370" width="69.3" height="9" fill="#F28E2B"/><rect x="723" y="387" width="139.9" height="14.5" fill="#E15759"/><rect x="723" y="391" width="176.8" height="7" fill="#7EB3DE"/><rect x="1203" y="387" width="294.5" height="14.5" fill="#4E79A7"/><rect x="1203" y="390" width="94.8" height="9" fill="#F28E2B"/><rect x="723" y="407" width="52.9" height="14.5" fill="#E15759"/><rect x="760.1" y="407" width="15.8" height="14.5" fill="#F0A7A6"/><rect x="723" y="411" width="36.1" height="7" fill="#305D8F"/><rect x="1203" y="407" width="105.8" height="14.5" fill="#4E79A7"/><rect x="1203" y="410" width="11.3" height="9" fill="#F28E2B"/><rect x="723" y="427" width="157.9" height="14.5" fill="#E15759"/><rect x="723" y="431" width="207.3" height="7" fill="#83B7E0"/><rect x="1203" y="427" width="326.9" height="14.5" fill="#4E79A7"/><rect x="1203" y="430" width="55.0" height="9" fill="#F28E2B"/><rect x="723" y="447" width="97.1" height="14.5" fill="#E15759"/><rect x="723" y="451" width="137.0" height="7" fill="#8CBFE5"/><rect x="1203" y="447" width="199.8" height="14.5" fill="#4E79A7"/><rect x="1203" y="450" width="10.2" height="9" fill="#F28E2B"/><rect x="723" y="467" width="86.9" height="14.5" fill="#E15759"/><rect x="787.1" y="467" width="22.8" height="14.5" fill="#F0A7A6"/><rect x="723" y="471" width="63.1" height="7" fill="#36679B"/><rect x="1203" y="467" width="179.0" height="14.5" fill="#4E79A7"/><rect x="1203" y="470" width="18.0" height="9" fill="#F28E2B"/><rect x="723" y="487" width="102.0" height="14.5" fill="#E15759"/><rect x="723" y="491" width="180.3" height="7" fill="#A6D4F0"/><rect x="1203" y="487" width="212.8" height="14.5" fill="#4E79A7"/><rect x="1203" y="490" width="40.0" height="9" fill="#F28E2B"/><rect x="723" y="507" width="69.7" height="14.5" fill="#E15759"/><rect x="769.5" y="507" width="23.2" height="14.5" fill="#F0A7A6"/><rect x="723" y="511" width="45.5" height="7" fill="#2B5586"/><rect x="1203" y="507" width="132.9" height="14.5" fill="#4E79A7"/><rect x="1203" y="510" width="55.0" height="9" fill="#F28E2B"/><rect x="723" y="527" width="63.9" height="14.5" fill="#E15759"/><rect x="723" y="531" width="117.2" height="7" fill="#AAD7F2"/><rect x="1203" y="527" width="133.7" height="14.5" fill="#4E79A7"/><rect x="723" y="547" width="46.8" height="14.5" fill="#E15759"/><rect x="723" y="551" width="66.4" height="7" fill="#8DBFE5"/><rect x="1203" y="547" width="92.8" height="14.5" fill="#4E79A7"/><rect x="1203" y="550" width="16.0" height="9" fill="#F28E2B"/><rect x="723" y="567" width="138.8" height="14.5" fill="#E15759"/><rect x="848.2" y="567" width="13.6" height="14.5" fill="#F0A7A6"/><rect x="723" y="571" width="124.2" height="7" fill="#5188BB"/><rect x="1203" y="567" width="288.7" height="14.5" fill="#4E79A7"/><rect x="1203" y="570" width="131.2" height="9" fill="#F28E2B"/><rect x="723" y="587" width="67.5" height="14.5" fill="#E15759"/><rect x="723" y="591" width="68.8" height="7" fill="#629ACA"/><rect x="1203" y="587" width="144.8" height="14.5" fill="#4E79A7"/><rect x="1203" y="590" width="120.2" height="9" fill="#F28E2B"/><rect x="723" y="607" width="232.8" height="14.5" fill="#E15759"/><rect x="723" y="611" width="455.6" height="7" fill="#B0DCF5"/><rect x="1203" y="607" width="455.9" height="14.5" fill="#4E79A7"/><rect x="1203" y="610" width="201.1" height="9" fill="#F28E2B"/><rect x="723" y="627" width="109.0" height="14.5" fill="#E15759"/><rect x="723" y="631" width="141.3" height="7" fill="#81B5E0"/><rect x="1203" y="627" width="232.9" height="14.5" fill="#4E79A7"/><rect x="1203" y="630" width="74.0" height="9" fill="#F28E2B"/><rect x="723" y="647" width="84.7" height="14.5" fill="#E15759"/><rect x="794.4" y="647" width="13.3" height="14.5" fill="#F0A7A6"/><rect x="723" y="651" width="70.4" height="7" fill="#477DB1"/><rect x="1203" y="647" width="173.0" height="14.5" fill="#4E79A7"/><rect x="1203" y="650" width="142.0" height="9" fill="#F28E2B"/><rect x="723" y="667" width="102.0" height="14.5" fill="#E15759"/><rect x="797.5" y="667" width="27.5" height="14.5" fill="#F0A7A6"/><rect x="723" y="671" width="73.5" height="7" fill="#356699"/><rect x="1203" y="667" width="210.0" height="14.5" fill="#4E79A7"/><rect x="1203" y="670" width="71.0" height="9" fill="#F28E2B"/><rect x="723" y="687" width="115.9" height="14.5" fill="#E15759"/><rect x="723" y="691" width="175.3" height="7" fill="#95C6E9"/><rect x="1203" y="687" width="235.7" height="14.5" fill="#4E79A7"/><rect x="1203" y="690" width="55.0" height="9" fill="#F28E2B"/><rect x="723" y="707" width="75.8" height="14.5" fill="#E15759"/><rect x="774.9" y="707" width="23.9" height="14.5" fill="#F0A7A6"/><rect x="723" y="711" width="50.9" height="7" fill="#2E5A8C"/><rect x="1203" y="707" width="155.8" height="14.5" fill="#4E79A7"/><rect x="1203" y="710" width="21.3" height="9" fill="#F28E2B"/><rect x="723" y="727" width="15.9" height="14.5" fill="#E15759"/><rect x="723" y="731" width="21.6" height="7" fill="#87BAE2"/><rect x="1203" y="727" width="31.8" height="14.5" fill="#4E79A7"/><rect x="723" y="747" width="84.7" height="14.5" fill="#E15759"/><rect x="723" y="751" width="136.5" height="7" fill="#9CCCEC"/><rect x="1203" y="747" width="178.0" height="14.5" fill="#4E79A7"/><rect x="1203" y="750" width="113.3" height="9" fill="#F28E2B"/><rect x="723" y="767" width="66.7" height="14.5" fill="#E15759"/><rect x="773.0" y="767" width="16.7" height="14.5" fill="#F0A7A6"/><rect x="723" y="771" width="49.0" height="7" fill="#37699D"/><rect x="1203" y="767" width="132.6" height="14.5" fill="#4E79A7"/><rect x="1203" y="770" width="34.8" height="9" fill="#F28E2B"/><rect x="723" y="787" width="62.6" height="14.5" fill="#E15759"/><rect x="777.4" y="787" width="8.2" height="14.5" fill="#F0A7A6"/><rect x="723" y="791" width="53.4" height="7" fill="#4A81B5"/><rect x="1203" y="787" width="128.0" height="14.5" fill="#4E79A7"/><rect x="1203" y="790" width="62.2" height="9" fill="#F28E2B"/><rect x="723" y="807" width="39.3" height="14.5" fill="#E15759"/><rect x="757.3" y="807" width="5.0" height="14.5" fill="#F0A7A6"/><rect x="723" y="811" width="33.3" height="7" fill="#4A80B4"/><rect x="1203" y="807" width="87.0" height="14.5" fill="#4E79A7"/><rect x="1203" y="810" width="41.4" height="9" fill="#F28E2B"/><rect x="723" y="827" width="6.7" height="14.5" fill="#E15759"/><rect x="723" y="831" width="9.9" height="7" fill="#91C3E7"/><rect x="1203" y="827" width="12.7" height="14.5" fill="#4E79A7"/><rect x="1203" y="830" width="16.8" height="9" fill="#F28E2B"/><rect x="723" y="847" width="2.6" height="14.5" fill="#E15759"/><rect x="723" y="851" width="5.0" height="7" fill="#AAD7F2"/><rect x="1203" y="847" width="6.9" height="14.5" fill="#4E79A7"/><rect x="723" y="867" width="72.5" height="14.5" fill="#E15759"/><rect x="723" y="871" width="88.4" height="7" fill="#7AAFDB"/><rect x="1203" y="867" width="157.0" height="14.5" fill="#4E79A7"/><rect x="1203" y="870" width="43.0" height="9" fill="#F28E2B"/></g><g clip-path="url(#rows)"><line x1="1019.0" y1="304" x2="1019.0" y2="325" stroke="#B9CCB5" stroke-width="1.6"/><line x1="880.6" y1="324" x2="880.6" y2="345" stroke="#B9CCB5" stroke-width="1.6"/><line x1="736.3" y1="344" x2="736.3" y2="365" stroke="#B9CCB5" stroke-width="1.6"/><line x1="930.1" y1="364" x2="930.1" y2="385" stroke="#B9CCB5" stroke-width="1.6"/><line x1="899.8" y1="384" x2="899.8" y2="405" stroke="#B9CCB5" stroke-width="1.6"/><line x1="759.1" y1="404" x2="759.1" y2="425" stroke="#B9CCB5" stroke-width="1.6"/><line x1="930.3" y1="424" x2="930.3" y2="445" stroke="#B9CCB5" stroke-width="1.6"/><line x1="860.0" y1="444" x2="860.0" y2="465" stroke="#B9CCB5" stroke-width="1.6"/><line x1="786.1" y1="464" x2="786.1" y2="485" stroke="#B9CCB5" stroke-width="1.6"/><line x1="903.3" y1="484" x2="903.3" y2="505" stroke="#B9CCB5" stroke-width="1.6"/><line x1="768.5" y1="504" x2="768.5" y2="525" stroke="#B9CCB5" stroke-width="1.6"/><line x1="840.2" y1="524" x2="840.2" y2="545" stroke="#B9CCB5" stroke-width="1.6"/><line x1="789.4" y1="544" x2="789.4" y2="565" stroke="#B9CCB5" stroke-width="1.6"/><line x1="847.2" y1="564" x2="847.2" y2="585" stroke="#B9CCB5" stroke-width="1.6"/><line x1="791.8" y1="584" x2="791.8" y2="605" stroke="#B9CCB5" stroke-width="1.6"/><line x1="1178.6" y1="604" x2="1178.6" y2="625" stroke="#B9CCB5" stroke-width="1.6"/><line x1="864.3" y1="624" x2="864.3" y2="645" stroke="#B9CCB5" stroke-width="1.6"/><line x1="793.4" y1="644" x2="793.4" y2="665" stroke="#B9CCB5" stroke-width="1.6"/><line x1="796.5" y1="664" x2="796.5" y2="685" stroke="#B9CCB5" stroke-width="1.6"/><line x1="898.3" y1="684" x2="898.3" y2="705" stroke="#B9CCB5" stroke-width="1.6"/><line x1="773.9" y1="704" x2="773.9" y2="725" stroke="#B9CCB5" stroke-width="1.6"/><line x1="744.6" y1="724" x2="744.6" y2="745" stroke="#B9CCB5" stroke-width="1.6"/><line x1="859.5" y1="744" x2="859.5" y2="765" stroke="#B9CCB5" stroke-width="1.6"/><line x1="772.0" y1="764" x2="772.0" y2="785" stroke="#B9CCB5" stroke-width="1.6"/><line x1="776.4" y1="784" x2="776.4" y2="805" stroke="#B9CCB5" stroke-width="1.6"/><line x1="756.3" y1="804" x2="756.3" y2="825" stroke="#B9CCB5" stroke-width="1.6"/><line x1="732.9" y1="824" x2="732.9" y2="845" stroke="#B9CCB5" stroke-width="1.6"/><line x1="728.0" y1="844" x2="728.0" y2="865" stroke="#B9CCB5" stroke-width="1.6"/><line x1="811.4" y1="864" x2="811.4" y2="885" stroke="#B9CCB5" stroke-width="1.6"/></g></svg>
<div style="position:absolute;left:472px;top:304.5px;width:1240px;height:572.5px;overflow:hidden;">
<div class="t" style="left:550.0px;top:3.0px;font-size:15px;color:#64A25D;letter-spacing:0.35px;">¥10,969K</div>
<div class="t" style="left:177.60000000000002px;top:3.0px;font-size:14.5px;color:#707070;font-weight:300;">苏州二组</div>
<div class="t" style="left:96.39999999999998px;top:3.0px;font-size:14.5px;color:#707070;font-weight:300;">苏州</div>
<div class="t" style="left:16.600000000000023px;top:3.0px;font-size:14.5px;color:#707070;font-weight:300;">东部战区</div>
<div class="t" style="left:411.6px;top:23.0px;font-size:15px;color:#64A25D;letter-spacing:0.35px;">¥5,846K</div>
<div class="t" style="left:177.60000000000002px;top:23.0px;font-size:14.5px;color:#707070;font-weight:300;">苏州一组</div>
<div class="t" style="left:267.3px;top:43.0px;font-size:15px;color:#64A25D;letter-spacing:0.35px;">¥500K</div>
<div class="t" style="left:177.60000000000002px;top:43.0px;font-size:14.5px;color:#707070;font-weight:300;">苏州三组</div>
<div class="t" style="left:461.1px;top:63.0px;font-size:15px;color:#64A25D;letter-spacing:0.35px;">¥7,679K</div>
<div class="t" style="left:177.60000000000002px;top:63.0px;font-size:14.5px;color:#707070;font-weight:300;">杭州一组</div>
<div class="t" style="left:96.39999999999998px;top:63.0px;font-size:14.5px;color:#707070;font-weight:300;">杭州</div>
<div class="t" style="left:430.8px;top:83.0px;font-size:15px;color:#64A25D;letter-spacing:0.35px;">¥6,554K</div>
<div class="t" style="left:177.60000000000002px;top:83.0px;font-size:14.5px;color:#707070;font-weight:300;">杭州二组</div>
<div class="t" style="left:290.1px;top:103.0px;font-size:15px;color:#64A25D;letter-spacing:0.35px;">¥1,346K</div>
<div class="t" style="left:177.60000000000002px;top:103.0px;font-size:14.5px;color:#707070;font-weight:300;">杭州三组</div>
<div class="t" style="left:461.3px;top:123.0px;font-size:15px;color:#64A25D;letter-spacing:0.35px;">¥7,686K</div>
<div class="t" style="left:177.60000000000002px;top:123.0px;font-size:14.5px;color:#707070;font-weight:300;">上海一组</div>
<div class="t" style="left:96.39999999999998px;top:123.0px;font-size:14.5px;color:#707070;font-weight:300;">上海</div>
<div class="t" style="left:391.0px;top:143.0px;font-size:15px;color:#64A25D;letter-spacing:0.35px;">¥5,083K</div>
<div class="t" style="left:177.60000000000002px;top:143.0px;font-size:14.5px;color:#707070;font-weight:300;">上海三组</div>
<div class="t" style="left:317.1px;top:163.0px;font-size:15px;color:#64A25D;letter-spacing:0.35px;">¥2,344K</div>
<div class="t" style="left:177.60000000000002px;top:163.0px;font-size:14.5px;color:#707070;font-weight:300;">上海二组</div>
<div class="t" style="left:434.3px;top:183.0px;font-size:15px;color:#64A25D;letter-spacing:0.35px;">¥6,684K</div>
<div class="t" style="left:177.60000000000002px;top:183.0px;font-size:14.5px;color:#707070;font-weight:300;">南京一组</div>
<div class="t" style="left:96.39999999999998px;top:183.0px;font-size:14.5px;color:#707070;font-weight:300;">南京</div>
<div class="t" style="left:299.5px;top:203.0px;font-size:15px;color:#64A25D;letter-spacing:0.35px;">¥1,694K</div>
<div class="t" style="left:177.60000000000002px;top:203.0px;font-size:14.5px;color:#707070;font-weight:300;">南京二组</div>
<div class="t" style="left:371.2px;top:223.0px;font-size:15px;color:#64A25D;letter-spacing:0.35px;">¥4,347K</div>
<div class="t" style="left:177.60000000000002px;top:223.0px;font-size:14.5px;color:#707070;font-weight:300;">南京三组</div>
<div class="t" style="left:320.4px;top:243.0px;font-size:15px;color:#64A25D;letter-spacing:0.35px;">¥2,466K</div>
<div class="t" style="left:177.60000000000002px;top:243.0px;font-size:14.5px;color:#707070;font-weight:300;">南京四组</div>
<div class="t" style="left:378.2px;top:263.0px;font-size:15px;color:#64A25D;letter-spacing:0.35px;">¥4,606K</div>
<div class="t" style="left:177.60000000000002px;top:263.0px;font-size:14.5px;color:#707070;font-weight:300;">合肥一组</div>
<div class="t" style="left:96.39999999999998px;top:263.0px;font-size:14.5px;color:#707070;font-weight:300;">合肥</div>
<div class="t" style="left:322.8px;top:283.0px;font-size:15px;color:#64A25D;letter-spacing:0.35px;">¥2,556K</div>
<div class="t" style="left:177.60000000000002px;top:283.0px;font-size:14.5px;color:#707070;font-weight:300;">合肥二组</div>
<div class="r" style="left:632px;top:302.5px;width:73.6px;height:14.5px;background:rgba(255,255,255,0.82);"></div>
<div class="t" style="left:635.5px;top:303.0px;font-size:15px;color:#64A25D;letter-spacing:0.5px;">¥16,883K</div>
<div class="t" style="left:177.60000000000002px;top:303.0px;font-size:14.5px;color:#707070;font-weight:300;">广州一组</div>
<div class="t" style="left:96.39999999999998px;top:303.0px;font-size:14.5px;color:#707070;font-weight:300;">广州</div>
<div class="t" style="left:16.600000000000023px;top:303.0px;font-size:14.5px;color:#707070;font-weight:300;">南部战区</div>
<div class="t" style="left:395.3px;top:323.0px;font-size:15px;color:#64A25D;letter-spacing:0.35px;">¥5,241K</div>
<div class="t" style="left:177.60000000000002px;top:323.0px;font-size:14.5px;color:#707070;font-weight:300;">广州二组</div>
<div class="t" style="left:324.4px;top:343.0px;font-size:15px;color:#64A25D;letter-spacing:0.35px;">¥2,615K</div>
<div class="t" style="left:177.60000000000002px;top:343.0px;font-size:14.5px;color:#707070;font-weight:300;">广州三组</div>
<div class="t" style="left:327.5px;top:363.0px;font-size:15px;color:#64A25D;letter-spacing:0.35px;">¥2,730K</div>
<div class="t" style="left:177.60000000000002px;top:363.0px;font-size:14.5px;color:#707070;font-weight:300;">深圳一组</div>
<div class="t" style="left:96.39999999999998px;top:363.0px;font-size:14.5px;color:#707070;font-weight:300;">深圳</div>
<div class="t" style="left:429.3px;top:383.0px;font-size:15px;color:#64A25D;letter-spacing:0.35px;">¥6,500K</div>
<div class="t" style="left:177.60000000000002px;top:383.0px;font-size:14.5px;color:#707070;font-weight:300;">武汉一组</div>
<div class="t" style="left:96.39999999999998px;top:383.0px;font-size:14.5px;color:#707070;font-weight:300;">武汉</div>
<div class="t" style="left:16.600000000000023px;top:383.0px;font-size:14.5px;color:#707070;font-weight:300;">西部战区</div>
<div class="t" style="left:304.9px;top:403.0px;font-size:15px;color:#64A25D;letter-spacing:0.35px;">¥1,894K</div>
<div class="t" style="left:177.60000000000002px;top:403.0px;font-size:14.5px;color:#707070;font-weight:300;">成都一组</div>
<div class="t" style="left:96.39999999999998px;top:403.0px;font-size:14.5px;color:#707070;font-weight:300;">成都</div>
<div class="t" style="left:275.6px;top:423.0px;font-size:15px;color:#64A25D;letter-spacing:0.35px;">¥806K</div>
<div class="t" style="left:177.60000000000002px;top:423.0px;font-size:14.5px;color:#707070;font-weight:300;">成都二组</div>
<div class="t" style="left:390.5px;top:443.0px;font-size:15px;color:#64A25D;letter-spacing:0.35px;">¥5,063K</div>
<div class="t" style="left:177.60000000000002px;top:443.0px;font-size:14.5px;color:#707070;font-weight:300;">西安一组</div>
<div class="t" style="left:96.39999999999998px;top:443.0px;font-size:14.5px;color:#707070;font-weight:300;">西安</div>
<div class="t" style="left:303.0px;top:463.0px;font-size:15px;color:#64A25D;letter-spacing:0.35px;">¥1,823K</div>
<div class="t" style="left:177.60000000000002px;top:463.0px;font-size:14.5px;color:#707070;font-weight:300;">重庆一组</div>
<div class="t" style="left:96.39999999999998px;top:463.0px;font-size:14.5px;color:#707070;font-weight:300;">重庆</div>
<div class="t" style="left:307.4px;top:483.0px;font-size:15px;color:#64A25D;letter-spacing:0.35px;">¥1,986K</div>
<div class="t" style="left:177.60000000000002px;top:483.0px;font-size:14.5px;color:#707070;font-weight:300;">北京三组</div>
<div class="t" style="left:96.39999999999998px;top:483.0px;font-size:14.5px;color:#707070;font-weight:300;">北京</div>
<div class="t" style="left:16.600000000000023px;top:483.0px;font-size:14.5px;color:#707070;font-weight:300;">北部战区</div>
<div class="t" style="left:287.3px;top:503.0px;font-size:15px;color:#64A25D;letter-spacing:0.35px;">¥1,242K</div>
<div class="t" style="left:177.60000000000002px;top:503.0px;font-size:14.5px;color:#707070;font-weight:300;">北京四组</div>
<div class="t" style="left:263.9px;top:523.0px;font-size:15px;color:#64A25D;letter-spacing:0.35px;">¥375K</div>
<div class="t" style="left:177.60000000000002px;top:523.0px;font-size:14.5px;color:#707070;font-weight:300;">北京一组</div>
<div class="t" style="left:259.0px;top:543.0px;font-size:15px;color:#64A25D;letter-spacing:0.35px;">¥191K</div>
<div class="t" style="left:177.60000000000002px;top:543.0px;font-size:14.5px;color:#707070;font-weight:300;">北京二组</div>
<div class="t" style="left:342.4px;top:563.0px;font-size:15px;color:#64A25D;letter-spacing:0.35px;">¥3,282K</div>
<div class="t" style="left:177.60000000000002px;top:563.0px;font-size:14.5px;color:#707070;font-weight:300;">天津一组</div>
<div class="t" style="left:96.39999999999998px;top:563.0px;font-size:14.5px;color:#707070;font-weight:300;">天津</div>
</div>
<div class="t" style="left:488.6px;top:286.5px;font-size:14px;color:#606060;font-weight:300;">战区</div>
<div class="t" style="left:568.4px;top:286.5px;font-size:14px;color:#606060;font-weight:300;">城市</div>
<div class="t" style="left:649.6px;top:286.5px;font-size:14px;color:#606060;font-weight:300;">小组</div>
<svg style="left:0;top:0" width="1" height="1"><path d="M536 290.3h11M536 293.8h8M536 297.3h5" stroke="#444" stroke-width="1.6"/><path d="M616 290.3h11M616 293.8h8M616 297.3h5" stroke="#444" stroke-width="1.6"/><path d="M696 290.3h11M696 293.8h8M696 297.3h5" stroke="#444" stroke-width="1.6"/><path d="M991 919.3h11M991 922.8h8M991 926.3h5" stroke="#444" stroke-width="1.6"/></svg>
<div class="t" style="left:724.4px;top:278.5px;font-size:15px;color:#707070;font-weight:normal;">0M</div>
<div class="t" style="left:724.4px;top:886.5px;font-size:15px;color:#707070;font-weight:normal;">0M</div>
<div class="t" style="left:766.3px;top:278.5px;font-size:15px;color:#707070;font-weight:normal;">2M</div>
<div class="t" style="left:766.3px;top:886.5px;font-size:15px;color:#707070;font-weight:normal;">2M</div>
<div class="t" style="left:820.3px;top:278.5px;font-size:15px;color:#707070;font-weight:normal;">4M</div>
<div class="t" style="left:820.3px;top:886.5px;font-size:15px;color:#707070;font-weight:normal;">4M</div>
<div class="t" style="left:874.3px;top:278.5px;font-size:15px;color:#707070;font-weight:normal;">6M</div>
<div class="t" style="left:874.3px;top:886.5px;font-size:15px;color:#707070;font-weight:normal;">6M</div>
<div class="t" style="left:928.3px;top:278.5px;font-size:15px;color:#707070;font-weight:normal;">8M</div>
<div class="t" style="left:928.3px;top:886.5px;font-size:15px;color:#707070;font-weight:normal;">8M</div>
<div class="t" style="left:977.8px;top:278.5px;font-size:15px;color:#707070;font-weight:normal;">10M</div>
<div class="t" style="left:977.8px;top:886.5px;font-size:15px;color:#707070;font-weight:normal;">10M</div>
<div class="t" style="left:1031.8px;top:278.5px;font-size:15px;color:#707070;font-weight:normal;">12M</div>
<div class="t" style="left:1031.8px;top:886.5px;font-size:15px;color:#707070;font-weight:normal;">12M</div>
<div class="t" style="left:1085.8px;top:278.5px;font-size:15px;color:#707070;font-weight:normal;">14M</div>
<div class="t" style="left:1085.8px;top:886.5px;font-size:15px;color:#707070;font-weight:normal;">14M</div>
<div class="t" style="left:1139.8px;top:278.5px;font-size:15px;color:#707070;font-weight:normal;">16M</div>
<div class="t" style="left:1139.8px;top:886.5px;font-size:15px;color:#707070;font-weight:normal;">16M</div>
<div class="t" style="left:1204.5px;top:278.5px;font-size:15px;color:#707070;font-weight:normal;">0K</div>
<div class="t" style="left:1204.5px;top:886.5px;font-size:15px;color:#707070;font-weight:normal;">0K</div>
<div class="t" style="left:1276.55px;top:278.5px;font-size:15px;color:#707070;font-weight:normal;">100K</div>
<div class="t" style="left:1276.55px;top:886.5px;font-size:15px;color:#707070;font-weight:normal;">100K</div>
<div class="t" style="left:1368.05px;top:278.5px;font-size:15px;color:#707070;font-weight:normal;">200K</div>
<div class="t" style="left:1368.05px;top:886.5px;font-size:15px;color:#707070;font-weight:normal;">200K</div>
<div class="t" style="left:1459.55px;top:278.5px;font-size:15px;color:#707070;font-weight:normal;">300K</div>
<div class="t" style="left:1459.55px;top:886.5px;font-size:15px;color:#707070;font-weight:normal;">300K</div>
<div class="t" style="left:1551.05px;top:278.5px;font-size:15px;color:#707070;font-weight:normal;">400K</div>
<div class="t" style="left:1551.05px;top:886.5px;font-size:15px;color:#707070;font-weight:normal;">400K</div>
<div class="t" style="left:1642.55px;top:278.5px;font-size:15px;color:#707070;font-weight:normal;">500K</div>
<div class="t" style="left:1642.55px;top:886.5px;font-size:15px;color:#707070;font-weight:normal;">500K</div>
<div class="t" style="left:949px;top:251px;font-size:14px;color:#606060;font-weight:300;">目标</div>
<div class="t" style="left:1413px;top:251px;font-size:14px;color:#606060;font-weight:300;">逾期金额</div>
<div class="t" style="left:940px;top:916px;font-size:14px;color:#606060;font-weight:300;">成交额</div>
<div class="t" style="left:1413px;top:916px;font-size:14px;color:#606060;font-weight:300;">应收利息</div>
<div class="r" style="left:1687px;top:304px;width:20px;height:573px;background:#F0F0F0;"></div>
<div class="r" style="left:1694.5px;top:325px;width:3.5px;height:525px;background:#777777;border-radius:2px;"></div>
<div class="r" style="left:1720px;top:181px;width:194px;height:101px;background:#FFFFFF;box-sizing:border-box;border:1px solid #D6D6D6;"></div>
<div class="r" style="left:1721px;top:182px;width:192px;height:33px;background:#F8F8F8;"></div>
<div class="t" style="left:1728px;top:192px;font-size:15px;color:#333;font-weight:normal;">度量名称</div>
<div class="r" style="left:1724px;top:220px;width:14px;height:14px;background:#4E79A7;"></div>
<div class="t" style="left:1744px;top:220.5px;font-size:14.5px;color:#606060;font-weight:300;">应收利息</div>
<div class="r" style="left:1724px;top:241px;width:14px;height:14px;background:#E15759;"></div>
<div class="t" style="left:1744px;top:241.5px;font-size:14.5px;color:#606060;font-weight:300;">成交额</div>
<div class="r" style="left:1724px;top:262px;width:14px;height:14px;background:#F28E2B;"></div>
<div class="t" style="left:1744px;top:262.5px;font-size:14.5px;color:#606060;font-weight:300;">逾期金额</div>
<div class="r" style="left:1720px;top:288px;width:194px;height:81px;background:#FFFFFF;box-sizing:border-box;border:1px solid #D6D6D6;"></div>
<div class="r" style="left:1721px;top:289px;width:192px;height:34px;background:#F8F8F8;"></div>
<div class="t" style="left:1728px;top:299px;font-size:15px;color:#333;font-weight:normal;">聚合(达成率)</div>
<div class="r" style="left:1725px;top:328px;width:184px;height:16px;background:linear-gradient(to right,#B0DCF5,#82B6E0 25%,#5C94C6 50%,#3D72A8 75%,#2A5484);box-sizing:border-box;border:1px solid #BBBBBB;"></div>
<div class="t" style="left:1725.5px;top:348px;font-size:15px;color:#444;font-weight:normal;">51%</div>
<div class="t" style="left:1870px;top:348px;font-size:15px;color:#444;font-weight:normal;">154%</div>
<div class="r" style="left:0px;top:957px;width:1918px;height:37px;background:#E6E6E6;box-sizing:border-box;border-top:1px solid #CFCFCF;"></div>
<div class="r" style="left:163px;top:958px;width:74px;height:36px;background:#F7F7F7;"></div>
<div class="r" style="left:237px;top:958px;width:1px;height:36px;background:#D0D0D0;"></div>
<div class="r" style="left:269.5px;top:958px;width:1px;height:36px;background:#D0D0D0;"></div>
<div class="r" style="left:301.5px;top:958px;width:1px;height:36px;background:#D0D0D0;"></div>
<div class="r" style="left:333.5px;top:958px;width:1px;height:36px;background:#D0D0D0;"></div>
<svg style="left:0;top:0" width="1" height="1"><path d="M11.5 971v9a3 1.3 0 0 0 6 0v-9a3 1.3 0 0 0 -6 0z" fill="none" stroke="#666" stroke-width="1.1"/><path d="M11.5 971a3 1.3 0 0 0 6 0" fill="none" stroke="#666" stroke-width="1.1"/><rect x="247.5" y="969.5" width="11" height="11" fill="none" stroke="#555" stroke-width="1.1"/><path d="M250 979v-3M253 979v-5" stroke="#555" stroke-width="1.1"/><path d="M258 976v8M254 980h8" stroke="#444" stroke-width="1.8"/><rect x="279.5" y="969.5" width="11" height="11" fill="none" stroke="#555" stroke-width="1.1"/><path d="M279.5 975h11M285 969.5v11" stroke="#555" stroke-width="1.1"/><path d="M290 976v8M286 980h8" stroke="#444" stroke-width="1.8"/><path d="M311.5 969.5l5 1.5h5.5v10h-5.5l-5 -1.5z M316.5 971v10" fill="none" stroke="#555" stroke-width="1.1"/><path d="M322 976v8M318 980h8" stroke="#444" stroke-width="1.8"/></svg>
<div class="t" style="left:25px;top:968px;font-size:15px;color:#505050;font-weight:normal;">数据源</div>
<div class="t" style="left:170px;top:968px;font-size:15px;color:#505050;font-weight:normal;">工作表 1</div>
<div class="t" style="left:1582px;top:962.5px;font-size:24.2px;color:#5A5A5A;font-weight:300;text-shadow:1px 1px 0 #FFFFFF;letter-spacing:0.7px;">掘金技术社区 @ 小小数分家</div>
<div class="r" style="left:0px;top:994px;width:1918px;height:21px;background:#EBEBEB;box-sizing:border-box;border-top:1px solid #D4D4D4;"></div>
<div class="t" style="left:4px;top:1000px;font-size:13.5px;color:#222;font-weight:normal;">116 个标记</div>
<div class="t" style="left:96px;top:1000px;font-size:13.5px;color:#222;font-weight:normal;">29 行 &nbsp;x &nbsp;2 列</div>
<div class="t" style="left:201px;top:1000px;font-size:13.5px;color:#222;font-weight:normal;">总和(应收利息): 5,870,970</div>
<div class="r" style="left:1502px;top:995px;width:1px;height:20px;background:#D6D6D6;"></div>
<div class="r" style="left:1658.5px;top:995px;width:1px;height:20px;background:#D6D6D6;"></div>
<div class="r" style="left:1690.5px;top:995px;width:1px;height:20px;background:#D6D6D6;"></div>
<div class="r" style="left:1722.5px;top:995px;width:1px;height:20px;background:#D6D6D6;"></div>
<div class="r" style="left:1850px;top:995px;width:1px;height:20px;background:#D6D6D6;"></div>
<div class="r" style="left:1730px;top:993px;width:64px;height:22px;background:#FFFFFF;"></div>
<svg style="left:0;top:0" width="1" height="1"><path d="M1736 998v16" stroke="#999" stroke-width="1" stroke-dasharray="1.5 2.5"/><rect x="1745.5" y="996.5" width="20" height="19" fill="none" stroke="#333" stroke-width="1"/><rect x="1778" y="998" width="7" height="3.5" rx="1.7" fill="none" stroke="#666" stroke-width="1.2"/><path d="M1810 1002l-3 3 3 3z" fill="#BBB"/><path d="M1822 1002l3 3-3 3z" fill="#BBB"/><path d="M1836 1002l3 3-3 3zM1840.5 1002v6" fill="#BBB" stroke="#BBB" stroke-width="1"/><g fill="#BBB"><rect x="1859" y="1000" width="2.5" height="2.5"/><rect x="1863" y="1000" width="2.5" height="2.5"/><rect x="1867" y="1000" width="2.5" height="2.5"/><rect x="1859" y="1004" width="2.5" height="2.5"/><rect x="1863" y="1004" width="2.5" height="2.5"/><rect x="1867" y="1004" width="2.5" height="2.5"/><rect x="1859" y="1008" width="2.5" height="2.5"/><rect x="1863" y="1008" width="2.5" height="2.5"/><rect x="1867" y="1008" width="2.5" height="2.5"/></g><rect x="1881" y="1000" width="12" height="7" fill="#BBB"/><rect x="1904" y="1000" width="11" height="11" fill="#666"/></svg>
<div class="t" style="left:1747px;top:997px;font-size:16px;color:#111;font-weight:normal;">拼</div>
<svg style="left:0;top:0" width="1918" height="1015"><path d="M88 888 Q190 712 290.5 527 M258 533.5 L290.5 527 L308 550" fill="none" stroke="#EC1F29" stroke-width="5" stroke-linecap="round" stroke-linejoin="round"/></svg>
</body></html>
